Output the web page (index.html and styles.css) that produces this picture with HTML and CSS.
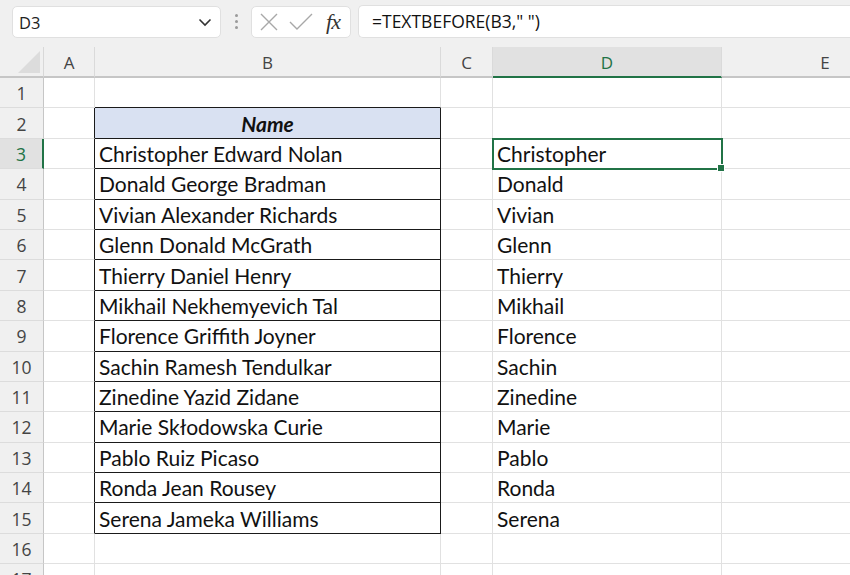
FILE: index.html
```html
<!DOCTYPE html>
<html>
<head>
<meta charset="utf-8">
<link rel="stylesheet" href="styles.css">
</head>
<body>
<div class="app">
  <div class="fbar">
    <div class="namebox">
      <span class="nb-text">D3</span>
      <svg class="chev" width="14" height="9" viewBox="0 0 14 9"><path d="M1.5 1.5 L7 7 L12.5 1.5" fill="none" stroke="#333" stroke-width="1.6"/></svg>
    </div>
    <div class="dots"><span></span><span></span><span></span></div>
    <div class="btns">
      <svg width="22" height="22" viewBox="0 0 22 22"><path d="M3 3 L19 19 M19 3 L3 19" stroke="#a8a8a8" stroke-width="1.4" fill="none"/></svg>
      <svg width="26" height="22" viewBox="0 0 26 22"><path d="M2 11 L9 18 L24 3" stroke="#a8a8a8" stroke-width="1.4" fill="none"/></svg>
      <span class="fx"><i>f</i><i>x</i></span>
    </div>
    <div class="formula">=TEXTBEFORE(B3," ")</div>
  </div>
  <div class="sheet">
    <div class="corner"><div class="tri"></div></div>
    <div class="ch">A</div>
    <div class="ch">B</div>
    <div class="ch">C</div>
    <div class="ch sel">D</div>
    <div class="ch last">E</div>

    <div class="rh">1</div><div class="c"></div><div class="c bb"></div><div class="c"></div><div class="c"></div><div class="c last"></div>
    <div class="rh">2</div><div class="c br"></div><div class="c t head">Name</div><div class="c"></div><div class="c"></div><div class="c last"></div>
    <div class="rh sel">3</div><div class="c br"></div><div class="c t">Christopher Edward Nolan</div><div class="c"></div><div class="c active">Christopher<span class="handle"></span></div><div class="c last"></div>
    <div class="rh">4</div><div class="c br"></div><div class="c t">Donald George Bradman</div><div class="c"></div><div class="c">Donald</div><div class="c last"></div>
    <div class="rh">5</div><div class="c br"></div><div class="c t">Vivian Alexander Richards</div><div class="c"></div><div class="c">Vivian</div><div class="c last"></div>
    <div class="rh">6</div><div class="c br"></div><div class="c t">Glenn Donald McGrath</div><div class="c"></div><div class="c">Glenn</div><div class="c last"></div>
    <div class="rh">7</div><div class="c br"></div><div class="c t">Thierry Daniel Henry</div><div class="c"></div><div class="c">Thierry</div><div class="c last"></div>
    <div class="rh">8</div><div class="c br"></div><div class="c t">Mikhail Nekhemyevich Tal</div><div class="c"></div><div class="c">Mikhail</div><div class="c last"></div>
    <div class="rh">9</div><div class="c br"></div><div class="c t">Florence Griffith Joyner</div><div class="c"></div><div class="c">Florence</div><div class="c last"></div>
    <div class="rh">10</div><div class="c br"></div><div class="c t">Sachin Ramesh Tendulkar</div><div class="c"></div><div class="c">Sachin</div><div class="c last"></div>
    <div class="rh">11</div><div class="c br"></div><div class="c t">Zinedine Yazid Zidane</div><div class="c"></div><div class="c">Zinedine</div><div class="c last"></div>
    <div class="rh">12</div><div class="c br"></div><div class="c t">Marie Skłodowska Curie</div><div class="c"></div><div class="c">Marie</div><div class="c last"></div>
    <div class="rh">13</div><div class="c br"></div><div class="c t">Pablo Ruiz Picaso</div><div class="c"></div><div class="c">Pablo</div><div class="c last"></div>
    <div class="rh">14</div><div class="c br"></div><div class="c t">Ronda Jean Rousey</div><div class="c"></div><div class="c">Ronda</div><div class="c last"></div>
    <div class="rh">15</div><div class="c br"></div><div class="c t">Serena Jameka Williams</div><div class="c"></div><div class="c">Serena</div><div class="c last"></div>
    <div class="rh">16</div><div class="c"></div><div class="c"></div><div class="c"></div><div class="c"></div><div class="c last"></div>
    <div class="rh">17</div><div class="c"></div><div class="c"></div><div class="c"></div><div class="c"></div><div class="c last"></div>
  </div>
</div>
</body>
</html>
```

FILE: styles.css
```css
* { box-sizing: border-box; }
html, body { margin: 0; padding: 0; }
body { width: 850px; height: 575px; overflow: hidden; background: #fff; font-family: "Open Sans", "Noto Sans", sans-serif; }
.app { width: 850px; height: 575px; overflow: hidden; background: #f0f0f0; }

.fbar { height: 47px; display: flex; align-items: flex-start; padding: 5px 0 0 12px; }
.namebox { width: 209px; height: 32px; background: #fff; border: 1px solid #e0e0e0; border-radius: 5px; display: flex; align-items: center; justify-content: space-between; padding: 0 8px 0 6px; margin-top: 1px; }
.nb-text { font-size: 16.5px; color: #222; }
.chev { display: block; }
.dots { width: 30px; height: 32px; display: flex; flex-direction: column; align-items: center; justify-content: center; gap: 3px; }
.dots span { width: 3px; height: 3px; background: #9a9a9a; border-radius: 50%; }
.btns { width: 100px; height: 32px; background: #fff; border: 1px solid #e0e0e0; border-radius: 5px; display: flex; align-items: center; padding: 0 0 0 6px; gap: 8px; margin-top: 1px; }
.btns svg { display: block; }
.fx { font-family: "Liberation Serif", "DejaVu Serif", serif; font-size: 22px; color: #333; margin-left: 4px; letter-spacing: -1px; }
.fx i { font-style: italic; }
.formula { flex: 1; height: 33px; margin-left: 7px; background: #fff; border: 1px solid #e0e0e0; border-right: none; border-radius: 5px 0 0 5px; font-size: 17.5px; color: #111; padding-left: 13px; line-height: 31px; }

.sheet { display: grid; grid-template-columns: 44px 51px 346px 52px 229px 206px; grid-template-rows: 31px repeat(17, 30.4px); overflow: hidden; }
.corner { background: #f0f0f0; border-right: 1px solid #d8d8d8; border-bottom: 2px solid #c6c6c6; position: relative; }
.tri { position: absolute; right: 3px; bottom: 3px; width: 0; height: 0; border-left: 22px solid transparent; border-bottom: 22px solid #dcdcdc; }
.ch { background: #f0f0f0; border-right: 1px solid #dadada; border-bottom: 2px solid #c6c6c6; font-size: 17px; color: #444; display: flex; align-items: center; justify-content: center; padding-top: 1px; }
.ch.last { border-right: none; }
.ch.sel { background: #e1e1e1; color: #217346; border-bottom: 2px solid #217346; }
.rh { background: #f0f0f0; border-right: 1px solid #c6c6c6; border-bottom: 1px solid #dcdcdc; font-size: 17.5px; color: #444; display: flex; align-items: center; justify-content: center; padding-top: 1px; }
.rh.sel { background: #e1e1e1; color: #217346; border-right: 2px solid #217346; }
.c { background: #fff; border-right: 1px solid #e1e1e1; border-bottom: 1px solid #e1e1e1; font-family: "Lato", sans-serif; font-size: 21px; color: #111; display: flex; align-items: center; padding: 0 0 0 4px; white-space: nowrap; position: relative; }
.c.last { border-right: none; }
.c.br { border-right-color: #1a1a1a; }
.c.bb { border-bottom-color: #1a1a1a; }
.c.t { border-right-color: #1a1a1a; border-bottom-color: #1a1a1a; }
.c.head { background: #d9e1f2; font-weight: bold; font-style: italic; justify-content: center; padding-left: 0; }
.c.active { outline: 2px solid #217346; outline-offset: -1px; z-index: 2; }
.handle { position: absolute; right: -4px; bottom: -4px; width: 6px; height: 6px; background: #217346; border: 1px solid #fff; box-sizing: content-box; }
```
